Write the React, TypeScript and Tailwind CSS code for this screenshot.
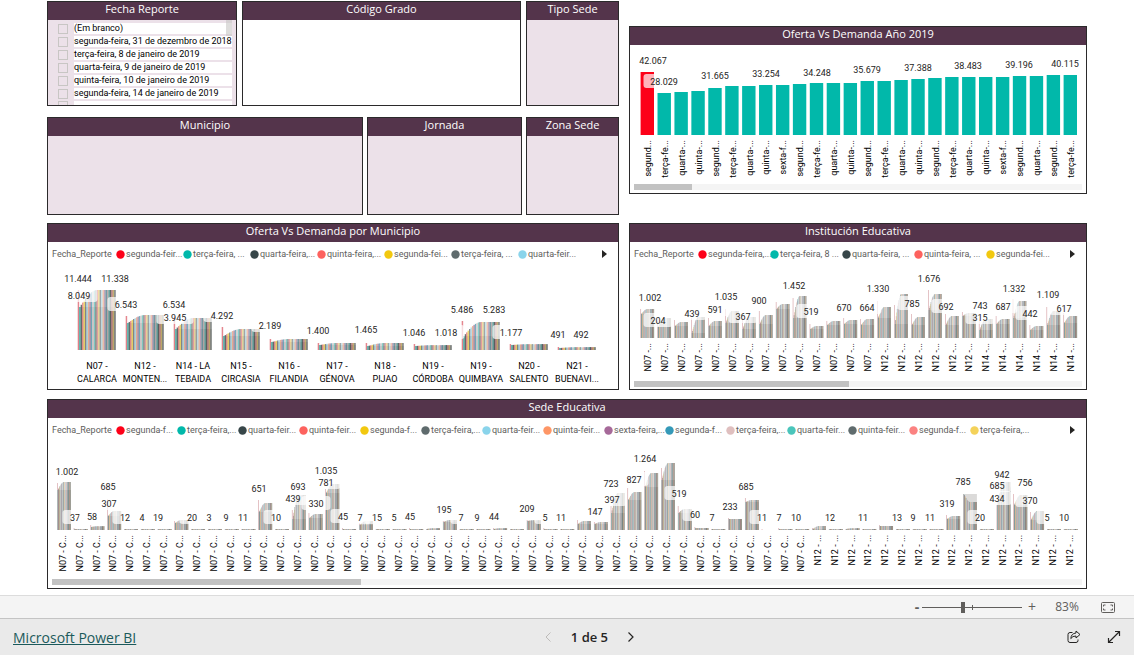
import type { ReactNode } from 'react'

type Group = [first: number, low: number, high: number]
type Label = [text: string, x: number, up: number]

const SERIES_COLORS = [
  '#fd0018', '#01b8aa', '#374649', '#fd625e', '#f2c80f', '#5f6b6d', '#8ad4eb', '#fe9666', '#a66999',
  '#3599b8', '#dfbfbf', '#4ac5bb', '#5f6b6d', '#fb8281', '#f4d25a', '#7f898a', '#a4ddee', '#fdab89',
  '#b687ac', '#28738a', '#a78f8f', '#168980', '#293537', '#bb4a4a', '#b59525', '#475052',
]

const DATES = [
  '(Em branco)',
  'segunda-feira, 31 de dezembro de 2018',
  'terça-feira, 8 de janeiro de 2019',
  'quarta-feira, 9 de janeiro de 2019',
  'quinta-feira, 10 de janeiro de 2019',
  'segunda-feira, 14 de janeiro de 2019',
]

const YEAR_HEIGHTS = [
  63, 42, 43, 44, 47, 49, 49, 50, 50, 51, 52, 52, 52, 54, 54, 55, 56, 57, 58, 58, 58, 58, 59, 59, 60, 60,
]

const YEAR_LABELS: Label[] = [
  ['42.067', 23, 74], ['28.029', 34, 53], ['31.665', 85, 59], ['33.254', 136, 61], ['34.248', 187, 62],
  ['35.679', 237, 65], ['37.388', 288, 67], ['38.483', 338, 69], ['39.196', 389, 70], ['40.115', 435, 71],
]

const MON = 'segund...'
const TUE = 'terça-fe...'
const WED = 'quarta-...'
const THU = 'quinta-...'
const FRI = 'sexta-f...'
const YEAR_AXIS = [
  MON, TUE, WED, THU, MON, TUE, WED, THU, FRI, MON, TUE, WED, THU,
  MON, TUE, WED, THU, MON, TUE, WED, THU, FRI, MON, WED, MON, TUE,
]

const TOWNS = [
  ['N07 -', 'CALARCA'], ['N12 -', 'MONTEN...'], ['N14 - LA', 'TEBAIDA'], ['N15 -', 'CIRCASIA'],
  ['N16 -', 'FILANDIA'], ['N17 -', 'GÉNOVA'], ['N18 -', 'PIJAO'], ['N19 -', 'CÓRDOBA'],
  ['N19 -', 'QUIMBAYA'], ['N20 -', 'SALENTO'], ['N21 -', 'BUENAVI...'],
]

const TOWN_GROUPS: Group[] = [
  [60, 43, 60], [34, 27, 35], [34, 21, 32], [23, 14, 21], [11, 8, 11], [7, 5, 7],
  [7, 4, 7], [6, 4, 5], [29, 14, 28], [6, 5, 6], [3, 2, 3],
]

const TOWN_LABELS: Label[] = [
  ['11.444', 30, 71], ['11.338', 67, 71], ['8.049', 31, 54], ['6.543', 78, 45], ['6.534', 126, 45],
  ['3.945', 127, 32], ['4.292', 174, 34], ['2.189', 222, 24], ['1.400', 270, 19], ['1.465', 318, 20],
  ['1.046', 366, 17], ['1.018', 398, 17], ['5.486', 414, 40], ['5.283', 446, 40], ['1.177', 463, 17],
  ['491', 510, 15], ['492', 533, 15],
]

const SCHOOL_GROUPS: Group[] = [
  [29, 24, 29], [17, 11, 20], [18, 12, 16], [20, 5, 21], [20, 12, 17], [29, 15, 27], [20, 9, 21],
  [27, 14, 23], [36, 29, 34], [40, 20, 42], [14, 9, 12], [17, 13, 17], [20, 14, 18], [19, 13, 19],
  [37, 20, 31], [33, 14, 44], [24, 13, 21], [48, 28, 44], [24, 13, 22], [26, 22, 25], [19, 8, 19],
  [22, 14, 19], [39, 20, 37], [13, 8, 12], [31, 13, 27], [25, 15, 22],
]

const SCHOOL_LABELS: Label[] = [
  ['1.002', 20, 40], ['204', 28, 17], ['439', 62, 24], ['591', 85, 28], ['1.035', 96, 41], ['367', 113, 21],
  ['900', 129, 37], ['1.452', 164, 52], ['519', 181, 26], ['670', 214, 30], ['664', 237, 30],
  ['1.330', 248, 49], ['785', 282, 34], ['1.676', 299, 59], ['692', 316, 31], ['743', 350, 32],
  ['315', 350, 20], ['687', 373, 31], ['1.332', 384, 49], ['442', 400, 24], ['1.109', 418, 43],
  ['617', 434, 29],
]

const SITE_GROUPS: Group[] = [
  [47, 40, 48], [2, 1, 1], [5, 3, 4], [31, 14, 19], [1, 1, 1], [1, 1, 1], [1, 1, 1], [9, 7, 10],
  [1, 1, 1], [1, 1, 1], [1, 1, 1], [1, 1, 1], [30, 18, 27], [1, 1, 1], [20, 11, 35], [17, 12, 16],
  [41, 37, 46], [2, 1, 1], [7, 5, 9], [1, 1, 1], [1, 1, 1], [2, 1, 1], [1, 1, 2], [9, 8, 10],
  [1, 1, 1], [1, 1, 1], [2, 1, 2], [1, 1, 1], [10, 9, 10], [2, 1, 1], [1, 1, 1], [10, 6, 9],
  [8, 6, 8], [24, 17, 37], [42, 30, 38], [59, 43, 57], [62, 50, 67], [24, 17, 21], [3, 2, 2], [1, 1, 1],
  [12, 11, 11], [32, 28, 30], [1, 0, 0], [2, 1, 1], [1, 1, 1], [2, 1, 4], [1, 1, 1], [1, 1, 2],
  [1, 1, 1], [5, 4, 4], [1, 1, 1], [1, 1, 1], [1, 1, 1], [15, 11, 14], [36, 36, 28], [1, 1, 1],
  [25, 25, 48], [36, 25, 35], [18, 10, 19], [1, 1, 1], [1, 1, 1],
]

const SITE_LABELS: Label[] = [
  ['1.002', 19, 58], ['37', 27, 12], ['58', 44, 13], ['685', 60, 43], ['307', 61, 26], ['12', 77, 12],
  ['4', 94, 12], ['19', 110, 12], ['20', 144, 12], ['3', 161, 12], ['9', 178, 12], ['11', 195, 12],
  ['651', 211, 41], ['10', 228, 12], ['439', 245, 31], ['693', 250, 43], ['330', 268, 26],
  ['1.035', 278, 59], ['781', 278, 47], ['45', 295, 13], ['7', 312, 12], ['15', 329, 12], ['5', 346, 12],
  ['45', 362, 13], ['195', 396, 20], ['7', 413, 12], ['9', 429, 12], ['44', 446, 13], ['209', 479, 21],
  ['5', 497, 12], ['11', 513, 12], ['147', 547, 18], ['723', 563, 46], ['397', 564, 30], ['827', 586, 50],
  ['1.264', 597, 71], ['519', 631, 36], ['60', 647, 15], ['7', 664, 12], ['233', 682, 23], ['685', 698, 43],
  ['11', 714, 12], ['7', 731, 12], ['10', 748, 12], ['12', 782, 12], ['11', 815, 12], ['13', 849, 12],
  ['9', 865, 12], ['11', 882, 12], ['319', 899, 26], ['785', 915, 48], ['20', 932, 12], ['942', 954, 55],
  ['685', 949, 44], ['434', 949, 31], ['756', 977, 47], ['370', 982, 29], ['5', 999, 12], ['10', 1016, 12],
]

const SCHOOL_AXIS = SCHOOL_GROUPS.map((_, i) => (i < 14 ? 'N07 -...' : i < 20 ? 'N12 -...' : 'N14 -...'))
const SITE_AXIS = SITE_GROUPS.map((_, i) => (i < 45 ? 'N07 - C...' : 'N12 - ...'))

function Card({ title, className = '', children }: { title: string; className?: string; children?: ReactNode }) {
  return (
    <section className={`flex min-w-0 flex-col border border-[#2b2a2b] ${className}`}>
      <h2 className="h-[18px] shrink-0 bg-[#54344b] text-center text-[11px] leading-[14px] text-white">{title}</h2>
      {children}
    </section>
  )
}

function Legend({ items, itemClass }: { items: string[]; itemClass: string }) {
  return (
    <div className="flex h-6 items-center pr-[11px] pl-1 font-[Roboto,sans-serif] text-[9px] leading-3 text-[#605e5c]">
      <span className="w-16 shrink-0">Fecha_Reporte</span>
      <ul className="flex min-w-0 flex-1">
        {items.map((item, i) => (
          <li key={i} className={`flex shrink-0 items-center gap-px whitespace-nowrap ${itemClass}`}>
            <svg viewBox="0 0 9 9" className="size-[9px] shrink-0">
              <circle cx="4.5" cy="4.5" r="4.2" fill={SERIES_COLORS[i]} />
            </svg>
            {item}
          </li>
        ))}
      </ul>
      <button aria-label="Próximo" className="shrink-0">
        <svg viewBox="0 0 5 8" className="h-2 w-[5px]" fill="#252423">
          <path d="M0 0L5 4L0 8Z" />
        </svg>
      </button>
    </div>
  )
}

function DataLabels({ labels, base }: { labels: Label[]; base: number }) {
  return (
    <g fontFamily="Roboto, sans-serif" fontSize="9" textAnchor="middle" fill="#252423">
      {labels.map(([text, x, up], i) => {
        const w = text.length * 4 + 17
        return (
          <g key={i}>
            <rect x={x - w / 2} y={base - up - 8} width={w} height="14" rx="3" fill="#fff" fillOpacity="0.7" />
            <text x={x} y={base - up + 3}>{text}</text>
          </g>
        )
      })}
    </g>
  )
}

function RotatedAxis({ names, start, pitch, top }: { names: string[]; start: number; pitch: number; top: number }) {
  return (
    <g fontFamily="Roboto, sans-serif" fontSize="9" textAnchor="end" fill="#000">
      {names.map((name, i) => {
        const x = Math.round(start + i * pitch)
        return (
          <text key={i} x={x} y={top} transform={`rotate(-90 ${x} ${top})`}>{name}</text>
        )
      })}
    </g>
  )
}

function GroupedBars({ groups, start, pitch, width, base, className }: {
  groups: Group[]
  start: number
  pitch: number
  width: number
  base: number
  className: string
}) {
  const step = width / SERIES_COLORS.length
  return (
    <g className={className}>
      {groups.map(([first, low, high], g) => (
        <g key={g}>
          <rect x={start + g * pitch + 1} y={base - low} width={width - 1} height={low} fill="#b9b6b0" fillOpacity="0.5" />
          {SERIES_COLORS.map((color, s) => {
            // the first report stands apart, the rest climb to a plateau
            const t = Math.min(1, Math.max(0, s - 1) / 12)
            const h = s === 0 ? first : low + (high - low) * Math.sin((t * Math.PI) / 2)
            return (
              <rect
                key={s}
                x={start + g * pitch + s * step}
                y={base - h}
                width={step}
                height={h}
                fill={color}
                fillOpacity={s === 0 ? 0.5 : 0.75}
              />
            )
          })}
        </g>
      ))}
    </g>
  )
}

function ScrollTrack({ thumbClass }: { thumbClass: string }) {
  return (
    <div className="mx-1 h-1.5 bg-[#f4f4f4]">
      <div className={`h-full bg-[#c2c2c2] ${thumbClass}`} />
    </div>
  )
}

function DateSlicer() {
  return (
    <Card title="Fecha Reporte" className="h-[105px] bg-[#ece1e9]">
      <div className="relative flex-1 overflow-hidden pt-0.5 pr-1 pl-2.5">
        {DATES.map((date) => (
          <label
            key={date}
            className="flex h-[13px] items-center gap-1.5 font-[Roboto,sans-serif] text-[9px] leading-[11px] whitespace-nowrap text-black"
          >
            <input type="checkbox" className="size-2.5 shrink-0 appearance-none border border-[#c8c6c4]" />
            <span className="h-[11px] min-w-0 flex-1 bg-white">{date}</span>
          </label>
        ))}
        <div className="flex h-[13px] gap-1.5 pt-px">
          <input type="checkbox" aria-label="terça-feira, 15 de janeiro de 2019" className="size-2.5 shrink-0 appearance-none border border-[#c8c6c4]" />
          <span className="h-[11px] flex-1 bg-white" />
        </div>
        <div className="absolute top-0 right-1 h-4 w-1.5 bg-[#c8c6c4]/60" />
      </div>
    </Card>
  )
}

function YearChart() {
  return (
    <Card title="Oferta Vs Demanda Año 2019" className="bg-white">
      <svg viewBox="0 0 456 139" className="w-full">
        {YEAR_HEIGHTS.map((h, i) => (
          <rect key={i} x={10.6 + i * 16.92} y={90 - h} width="13.4" height={h} fill={i === 0 ? '#fd0018' : '#01b8aa'} />
        ))}
        <DataLabels labels={YEAR_LABELS} base={90} />
        <RotatedAxis names={YEAR_AXIS} start={21} pitch={16.92} top={95} />
      </svg>
      <ScrollTrack thumbClass="w-[13%]" />
      <div className="h-[3px]" />
    </Card>
  )
}

function TownChart() {
  return (
    <Card title="Oferta Vs Demanda por Municipio" className="bg-white">
      <Legend
        itemClass="w-[67px]"
        items={['segunda-feir...', 'terça-feira, ...', 'quarta-feira,...', 'quinta-feira,...', 'segunda-fei...', 'terça-feira, ...', 'quarta-feir...']}
      />
      <svg viewBox="0 0 570 123" className="w-full">
        <GroupedBars groups={TOWN_GROUPS} start={29.7} pitch={48} width={38} base={84} className="saturate-75" />
        <DataLabels labels={TOWN_LABELS} base={84} />
        <g fontFamily="Roboto, sans-serif" fontSize="9" textAnchor="middle" fill="#000">
          {TOWNS.map(([code, name], i) => (
            <text key={i} x={49 + i * 48} y="103">
              {code}
              <tspan x={49 + i * 48} dy="13">{name}</tspan>
            </text>
          ))}
        </g>
      </svg>
    </Card>
  )
}

function SchoolChart() {
  return (
    <Card title="Institución Educativa" className="bg-white">
      <Legend
        itemClass="w-[72px]"
        items={['segunda-feira,...', 'terça-feira, 8 ...', 'quarta-feira, ...', 'quinta-feira, ...', 'segunda-fei...']}
      />
      <svg viewBox="0 0 456 115" className="w-full">
        <GroupedBars groups={SCHOOL_GROUPS} start={10.5} pitch={16.92} width={13.6} base={72} className="saturate-50" />
        <DataLabels labels={SCHOOL_LABELS} base={72} />
        <RotatedAxis names={SCHOOL_AXIS} start={21} pitch={16.92} top={77} />
      </svg>
      <ScrollTrack thumbClass="w-[48%]" />
    </Card>
  )
}

function SiteChart() {
  return (
    <Card title="Sede Educativa" className="mt-[9px] bg-white">
      <Legend
        itemClass="w-[61px]"
        items={[
          'segunda-f...', 'terça-feira,...', 'quarta-feir...', 'quinta-feir...', 'segunda-f...', 'terça-feira,...',
          'quarta-feir...', 'quinta-feir...', 'sexta-feira,...', 'segunda-f...', 'terça-feira,...', 'quarta-feir...',
          'quinta-feir...', 'segunda-f...', 'terça-feira,...',
        ]}
      />
      <svg viewBox="0 0 1038 137" className="w-full">
        <GroupedBars groups={SITE_GROUPS} start={9} pitch={16.78} width={13.8} base={88} className="saturate-50" />
        <DataLabels labels={SITE_LABELS} base={88} />
        <RotatedAxis names={SITE_AXIS} start={18} pitch={16.78} top={93} />
      </svg>
      <ScrollTrack thumbClass="w-[30%]" />
      <div className="h-[3px]" />
    </Card>
  )
}

function ZoomBar() {
  return (
    <div className="flex h-[23px] items-center justify-end border-t border-[#dcdcdc] bg-[#f4f4f4] pr-[19px] text-[#605e5c]">
      <button aria-label="Reduzir" className="w-2.5 text-sm leading-5 font-bold">-</button>
      <div className="relative flex h-3 w-[100px] items-center">
        <input
          type="range"
          aria-label="Zoom"
          min="0"
          max="100"
          defaultValue="41"
          className="h-px w-full appearance-none bg-[#605e5c] [&::-webkit-slider-thumb]:h-[11px] [&::-webkit-slider-thumb]:w-1 [&::-webkit-slider-thumb]:appearance-none [&::-webkit-slider-thumb]:bg-[#605e5c]"
        />
        <span className="absolute left-1/2 h-[5px] w-px bg-[#605e5c]" />
      </div>
      <button aria-label="Ampliar" className="w-5 text-center text-sm leading-5">+</button>
      <span className="ml-[7px] w-9 text-center text-xs leading-5">83%</span>
      <button aria-label="Ajustar à página" className="ml-4">
        <svg viewBox="0 0 14 11" className="h-[11px] w-3.5" fill="none" stroke="#605e5c">
          <rect x="0.5" y="0.5" width="13" height="10" rx="1" />
          <path d="M2.5 4.5V3H4.5M9.5 3H11.5V4.5M11.5 6.5V8H9.5M4.5 8H2.5V6.5" />
        </svg>
      </button>
    </div>
  )
}

function Footer() {
  return (
    <footer className="flex h-[37px] items-center border-t border-[#c4c4c4] bg-[#eaeaea] px-[13px]">
      <div className="w-[48%]">
        <a href="https://powerbi.microsoft.com" className="text-sm leading-5 text-[#1b5a5b] underline">Microsoft Power BI</a>
      </div>
      <nav className="flex items-center gap-5 text-[13px] leading-5 font-semibold text-[#252423]">
        <button aria-label="Página anterior">
          <svg viewBox="0 0 6 10" className="h-2.5 w-1.5" fill="none" stroke="#bdbbb9">
            <path d="M5.5 0.5L1 5L5.5 9.5" />
          </svg>
        </button>
        <span>1 de 5</span>
        <button aria-label="Próxima página">
          <svg viewBox="0 0 6 10" className="h-2.5 w-1.5" fill="none" stroke="#252423" strokeWidth="1.2">
            <path d="M0.5 0.5L5 5L0.5 9.5" />
          </svg>
        </button>
      </nav>
      <div className="ml-auto flex items-center gap-[26px]">
        <button aria-label="Compartilhar">
          <svg viewBox="0 0 14 14" className="size-3.5" fill="none" stroke="#252423" strokeLinejoin="round">
            <path d="M5.5 2.5H3Q1 2.5 1 4.5V10.5Q1 12.5 3 12.5H9Q11 12.5 11 10.5V9.5" />
            <path d="M9 1L13 4.5L9 8V6Q5.5 5.8 3.8 8.6Q4.2 3.4 9 3Z" />
          </svg>
        </button>
        <button aria-label="Tela inteira">
          <svg viewBox="0 0 14 14" className="size-3.5" fill="none" stroke="#252423" strokeWidth="1.2">
            <path d="M1.5 12.5L12.5 1.5M8 1.5H12.5V6M1.5 8V12.5H6" />
          </svg>
        </button>
      </div>
    </footer>
  )
}

export default function App() {
  return (
    <div className="flex min-h-screen flex-col bg-white font-['Open_Sans','Noto_Sans',sans-serif]">
      <main className="flex-1 px-[47px] pb-1.5">
        <div className="grid grid-cols-[572fr_458fr] items-start gap-x-2.5">
          <div className="flex flex-col gap-[11px] pt-px">
            <div className="grid grid-cols-[190fr_279fr_93fr] gap-x-[5px]">
              <DateSlicer />
              <Card title="Código Grado" className="bg-white" />
              <Card title="Tipo Sede" className="bg-[#ece1e9]" />
            </div>
            <div className="grid h-[98px] grid-cols-[316fr_155fr_93fr] gap-x-1">
              <Card title="Municipio" className="bg-[#ece1e9]" />
              <Card title="Jornada" className="bg-[#ece1e9]" />
              <Card title="Zona Sede" className="bg-[#ece1e9]" />
            </div>
          </div>
          <div className="pt-[26px]">
            <YearChart />
          </div>
        </div>
        <div className="mt-2 grid grid-cols-[572fr_458fr] gap-x-2.5">
          <TownChart />
          <SchoolChart />
        </div>
        <SiteChart />
      </main>
      <ZoomBar />
      <Footer />
    </div>
  )
}
